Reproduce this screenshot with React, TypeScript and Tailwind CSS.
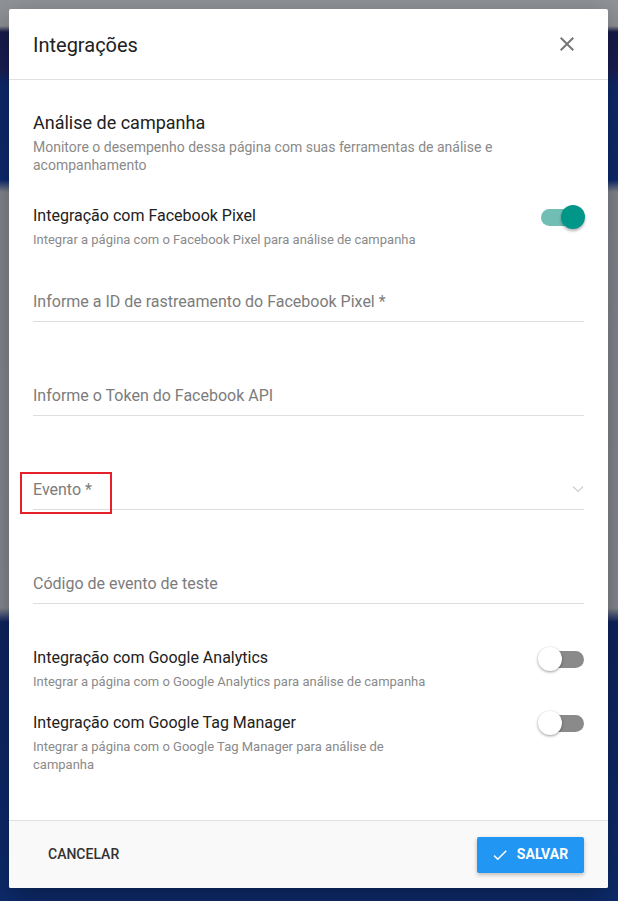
import React from "react";

function Switch({ on }: { on: boolean }) {
  return (
    <div className="relative w-[46px] h-[24px] shrink-0">
      <div
        className={
          on
            ? "absolute left-[2px] right-[6px] top-[4px] h-[17px] rounded-full bg-[#70beb4]"
            : "absolute left-[8px] right-0 top-[4px] h-[17px] rounded-full bg-[#8a8a8a]"
        }
      />
      <div
        className={
          on
            ? "absolute right-0 top-0 w-[24px] h-[24px] rounded-full bg-[#009688] shadow-[0_2px_3px_rgba(0,0,0,0.3)]"
            : "absolute left-0 top-0 w-[24px] h-[24px] rounded-full bg-white shadow-[0_1px_3px_rgba(0,0,0,0.4)]"
        }
      />
    </div>
  );
}

function Field({ label, select, first }: { label: string; select?: boolean; first?: boolean }) {
  return (
    <div
      className={
        first
          ? "relative flex items-center justify-between border-b border-[#dedede] pb-[7px] h-[32px] mt-[41px]"
          : "relative flex items-center justify-between border-b border-[#dedede] pb-[7px] h-[32px] mt-[62px]"
      }
    >
      <span className="text-[16px] leading-[24px] text-[#7c7c7c]">{label}</span>
      {select && (
        <svg width="12" height="8" viewBox="0 0 12 8" className="mb-[2px]">
          <polyline points="1,1.5 6,6.5 11,1.5" fill="none" stroke="#cfcfcf" strokeWidth="1.2" />
        </svg>
      )}
    </div>
  );
}

export default function App() {
  return (
    <div
      className="w-[618px] h-[901px] overflow-hidden pt-[9px] pl-[9px] bg-[linear-gradient(to_bottom,#909398_0px,#8d9095_26px,#161b4c_32px,#1a1f55_70px,#0d2a6c_85px,#0e2b70_180px,#858890_192px,#878a91_608px,#0f2560_622px,#0d2c6e_901px)]"
      style={{ fontFamily: "Roboto, 'Noto Sans', sans-serif" }}
    >
      <div className="w-[599px] h-[879px] bg-white rounded-[2px] shadow-[0_10px_30px_rgba(0,0,0,0.35)] flex flex-col overflow-hidden">
        {/* header */}
        <div className="h-[71px] shrink-0 flex items-center justify-between pl-6 pr-[29px] border-b border-[#e0e0e0]">
          <span className="text-[20px] leading-[28px] text-[#212121] pt-[1px]">Integrações</span>
          <svg width="24" height="24" viewBox="0 0 24 24">
            <path
              d="M19 6.41 17.59 5 12 10.59 6.41 5 5 6.41 10.59 12 5 17.59 6.41 19 12 13.41 17.59 19 19 17.59 13.41 12z"
              fill="#777777"
            />
          </svg>
        </div>

        {/* body */}
        <div className="flex-1 px-6 pt-[31px] relative">
          <div className="text-[18px] leading-[24px] text-[#212121]">Análise de campanha</div>
          <div className="text-[14px] leading-[18px] text-[#8a8a8a] mt-[3px] pr-[60px]">
            Monitore o desempenho dessa página com suas ferramentas de análise e acompanhamento
          </div>

          <div className="flex items-start justify-between mt-[30px]">
            <div>
              <div className="text-[16px] leading-[24px] text-[#212121]">Integração com Facebook Pixel</div>
              <div className="text-[13px] leading-[18px] text-[#8a8a8a] mt-[3px]">
                Integrar a página com o Facebook Pixel para análise de campanha
              </div>
            </div>
            <div className="mt-[1px] -mr-[1px]">
              <Switch on />
            </div>
          </div>

          <div>
            <Field label="Informe a ID de rastreamento do Facebook Pixel *" first />
            <Field label="Informe o Token do Facebook API" />
            <Field label="Evento *" select />
            <Field label="Código de evento de teste" />
          </div>

          <div className="flex items-start justify-between mt-[42px]">
            <div>
              <div className="text-[16px] leading-[24px] text-[#212121]">Integração com Google Analytics</div>
              <div className="text-[13px] leading-[18px] text-[#8a8a8a] mt-[3px]">
                Integrar a página com o Google Analytics para análise de campanha
              </div>
            </div>
            <div className="mt-[1px]">
              <Switch on={false} />
            </div>
          </div>

          <div className="flex items-start justify-between mt-[20px]">
            <div className="max-w-[396px]">
              <div className="text-[16px] leading-[24px] text-[#212121]">Integração com Google Tag Manager</div>
              <div className="text-[13px] leading-[18px] text-[#8a8a8a] mt-[3px]">
                Integrar a página com o Google Tag Manager para análise de campanha
              </div>
            </div>
            <div className="mt-0">
              <Switch on={false} />
            </div>
          </div>

          {/* annotation box */}
          <div className="absolute left-[11px] top-[392px] w-[92px] h-[42px] border-2 border-[#e5202a] pointer-events-none" />
        </div>

        {/* footer */}
        <div className="h-[68px] shrink-0 bg-[#f9f9f9] border-t border-[#e0e0e0] flex items-center justify-between px-6">
          <button className="h-[36px] px-4 -ml-[1px] text-[14px] font-medium text-[#333333] uppercase">
            Cancelar
          </button>
          <button className="h-[36px] w-[107px] rounded-[2px] bg-[#2196f3] text-white text-[14px] font-bold uppercase flex items-center justify-center gap-[8px] shadow-[0_2px_4px_rgba(0,0,0,0.25)] pr-[2px]">
            <svg width="18" height="18" viewBox="0 0 24 24">
              <path d="M21 7 9 19l-5.5-5.5 1.41-1.41L9 16.17 19.59 5.59z" fill="#ffffff" />
            </svg>
            Salvar
          </button>
        </div>
      </div>
    </div>
  );
}
